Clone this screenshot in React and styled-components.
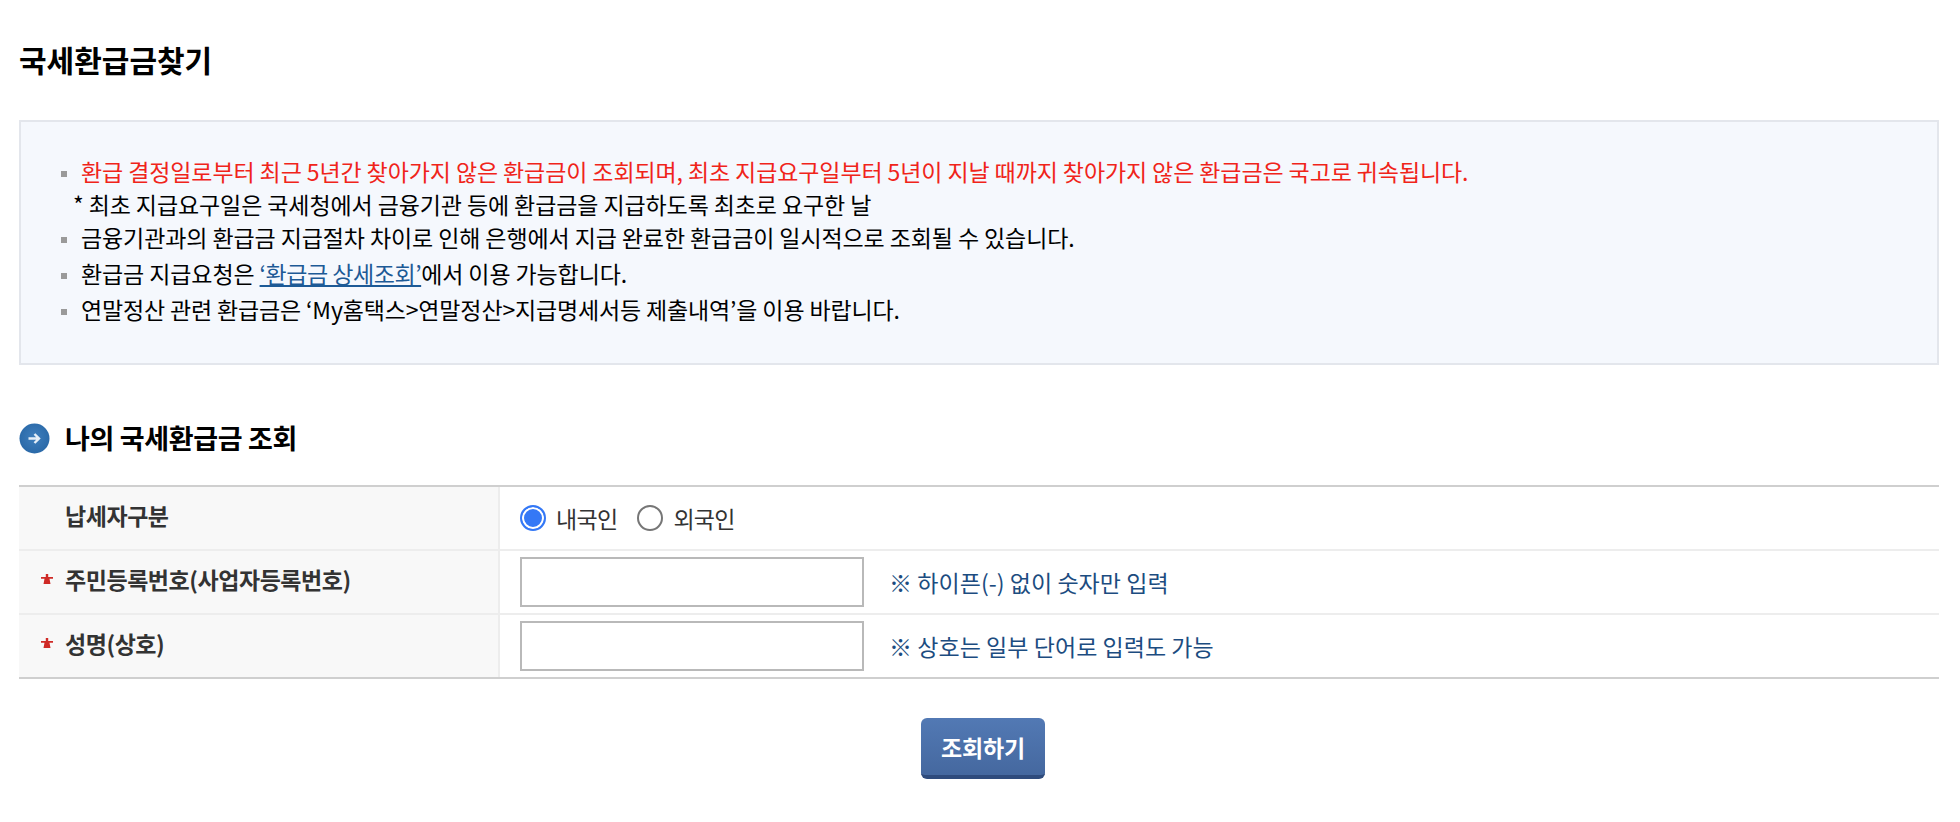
import React from 'react'
import styled, { createGlobalStyle } from 'styled-components'

const Global = createGlobalStyle`
  html, body {
    margin: 0;
    padding: 0;
    background: #ffffff;
  }
  body {
    font-family: "Noto Sans CJK KR", "Liberation Sans", sans-serif;
    color: #000000;
  }
`

const Page = styled.div`
  width: 1960px;
  box-sizing: border-box;
  padding: 0 21px 0 19px;
`

const Title = styled.h1`
  margin: 0;
  padding-top: 38px;
  height: 120px;
  box-sizing: border-box;
  font-size: 30px;
  line-height: 42px;
  font-weight: 700;
  letter-spacing: 0;
`

const Notice = styled.ul`
  margin: 0;
  list-style: none;
  height: 245px;
  box-sizing: border-box;
  padding: 33px 0 0 40px;
  background: #f5f8fd;
  border: 2px solid #e3e6ec;
  font-size: 23px;
  letter-spacing: -0.1px;
`

const NoticeItem = styled.li`
  position: relative;
  padding-left: 20px;
  height: ${p => p.$h || 33}px;
  line-height: 33px;
  color: ${p => p.$red ? '#f0241a' : '#000000'};
  letter-spacing: ${p => p.$tight ? '-0.15px' : 'inherit'};

  &::before {
    content: '';
    position: absolute;
    left: 0;
    top: 16px;
    width: 6px;
    height: 6px;
    background: #9a9a9a;
  }
`

const NoteLine = styled.li`
  height: 33px;
  line-height: 33px;
  padding-left: 12px;
`

const DetailLink = styled.a`
  color: #1d5a96;
  text-decoration: underline;
  letter-spacing: -0.45px;
`

const SectionHead = styled.div`
  display: flex;
  align-items: center;
  gap: 15px;
  height: 40px;
  margin-top: 53px;
  margin-bottom: 27px;
`

const SectionTitle = styled.h2`
  margin: 0;
  font-size: 27px;
  line-height: 40px;
  font-weight: 700;
  letter-spacing: -0.35px;
`

const Form = styled.div`
  border-top: 2px solid #cfcfcf;
  border-bottom: 2px solid #cfcfcf;
`

const Row = styled.div`
  display: grid;
  grid-template-columns: 481px 1fr;
  height: 62px;
  border-bottom: ${p => p.$last ? 'none' : '2px solid #ededed'};
`

const Label = styled.div`
  display: flex;
  align-items: ${p => p.$top ? 'flex-start' : 'center'};
  padding: ${p => p.$top ? '12px' : '0'} 0 ${p => p.$top ? '0' : '7px'} 22px;
  background: #f8f8f8;
  border-right: 2px solid #ededed;
  font-size: 23px;
  font-weight: 700;
  letter-spacing: -0.45px;
  color: #333333;
  line-height: 32px;
`

const Star = styled.svg`
  width: 12px;
  height: 10px;
  margin-right: 12px;
  flex: none;
`

const Spacer = styled.span`
  width: 24px;
  flex: none;
`

const Field = styled.div`
  display: flex;
  align-items: center;
  padding-left: 20px;
`

const RadioMark = styled.span`
  width: 26px;
  height: 26px;
  box-sizing: border-box;
  border-radius: 50%;
  flex: none;
  background: ${p => p.$on ? '#3478f6' : '#ffffff'};
  border: 2px solid ${p => p.$on ? '#3478f6' : '#767676'};
  box-shadow: ${p => p.$on ? 'inset 0 0 0 2px #ffffff' : 'none'};
  margin-right: 10px;
`

const RadioText = styled.span`
  font-size: 23px;
  letter-spacing: -0.7px;
  color: #333333;
  margin-right: 20px;
`

const TextInput = styled.input`
  width: 344px;
  height: 50px;
  box-sizing: border-box;
  border: 2px solid #b9b9b9;
  background: #ffffff;
  margin: 0;
  outline: none;
`

const Hint = styled.span`
  margin-left: 25px;
  font-size: 23px;
  letter-spacing: 0.05px;
  color: #1c4c80;
`

const Actions = styled.div`
  display: flex;
  justify-content: center;
  margin-top: 39px;
  padding-left: 8px;
`

const SearchButton = styled.button`
  width: 124px;
  height: 61px;
  box-sizing: border-box;
  border: 0;
  border-bottom: 4px solid #2f4b7c;
  border-radius: 6px;
  background: linear-gradient(#5279b4, #45689f);
  color: #ffffff;
  font-family: inherit;
  font-size: 23px;
  font-weight: 700;
  letter-spacing: -0.2px;
  padding: 0;
`

const ArrowBadge = () => (
  <svg width="31" height="31" viewBox="0 0 31 31">
    <defs>
      <radialGradient id="badge" cx="50%" cy="45%" r="55%">
        <stop offset="0%" stopColor="#3f7fbd" />
        <stop offset="100%" stopColor="#2a69a8" />
      </radialGradient>
    </defs>
    <circle cx="15.5" cy="15.5" r="15" fill="url(#badge)" />
    <path d="M9.5 15.5h10.5M15.5 11l4.5 4.5-4.5 4.5" fill="none" stroke="#e6eff8" strokeWidth="2.4" />
  </svg>
)

const RedStar = () => (
  <Star viewBox="0 0 12 10">
    <path d="M4.8 0h2.4v3H12v1.8H8.5L9.5 10h-7l1-5.2H0V3h4.8z" fill="#cf2a26" />
  </Star>
)

const App = () => (
  <Page>
    <Global />
    <Title>국세환급금찾기</Title>
    <Notice>
      <NoticeItem $red>환급 결정일로부터 최근 5년간 찾아가지 않은 환급금이 조회되며, 최초 지급요구일부터 5년이 지날 때까지 찾아가지 않은 환급금은 국고로 귀속됩니다.</NoticeItem>
      <NoteLine>* 최초 지급요구일은 국세청에서 금융기관 등에 환급금을 지급하도록 최초로 요구한 날</NoteLine>
      <NoticeItem $h={36}>금융기관과의 환급금 지급절차 차이로 인해 은행에서 지급 완료한 환급금이 일시적으로 조회될 수 있습니다.</NoticeItem>
      <NoticeItem $h={36}>환급금 지급요청은 <DetailLink href="#">‘환급금 상세조회’</DetailLink>에서 이용 가능합니다.</NoticeItem>
      <NoticeItem $tight>연말정산 관련 환급금은 ‘My홈택스&gt;연말정산&gt;지급명세서등 제출내역’을 이용 바랍니다.</NoticeItem>
    </Notice>
    <SectionHead>
      <ArrowBadge />
      <SectionTitle>나의 국세환급금 조회</SectionTitle>
    </SectionHead>
    <Form>
      <Row>
        <Label $top><Spacer />납세자구분</Label>
        <Field>
          <RadioMark $on />
          <RadioText>내국인</RadioText>
          <RadioMark />
          <RadioText>외국인</RadioText>
        </Field>
      </Row>
      <Row>
        <Label><RedStar />주민등록번호(사업자등록번호)</Label>
        <Field>
          <TextInput />
          <Hint>※ 하이픈(-) 없이 숫자만 입력</Hint>
        </Field>
      </Row>
      <Row $last>
        <Label><RedStar />성명(상호)</Label>
        <Field>
          <TextInput />
          <Hint>※ 상호는 일부 단어로 입력도 가능</Hint>
        </Field>
      </Row>
    </Form>
    <Actions>
      <SearchButton>조회하기</SearchButton>
    </Actions>
  </Page>
)

export default App
